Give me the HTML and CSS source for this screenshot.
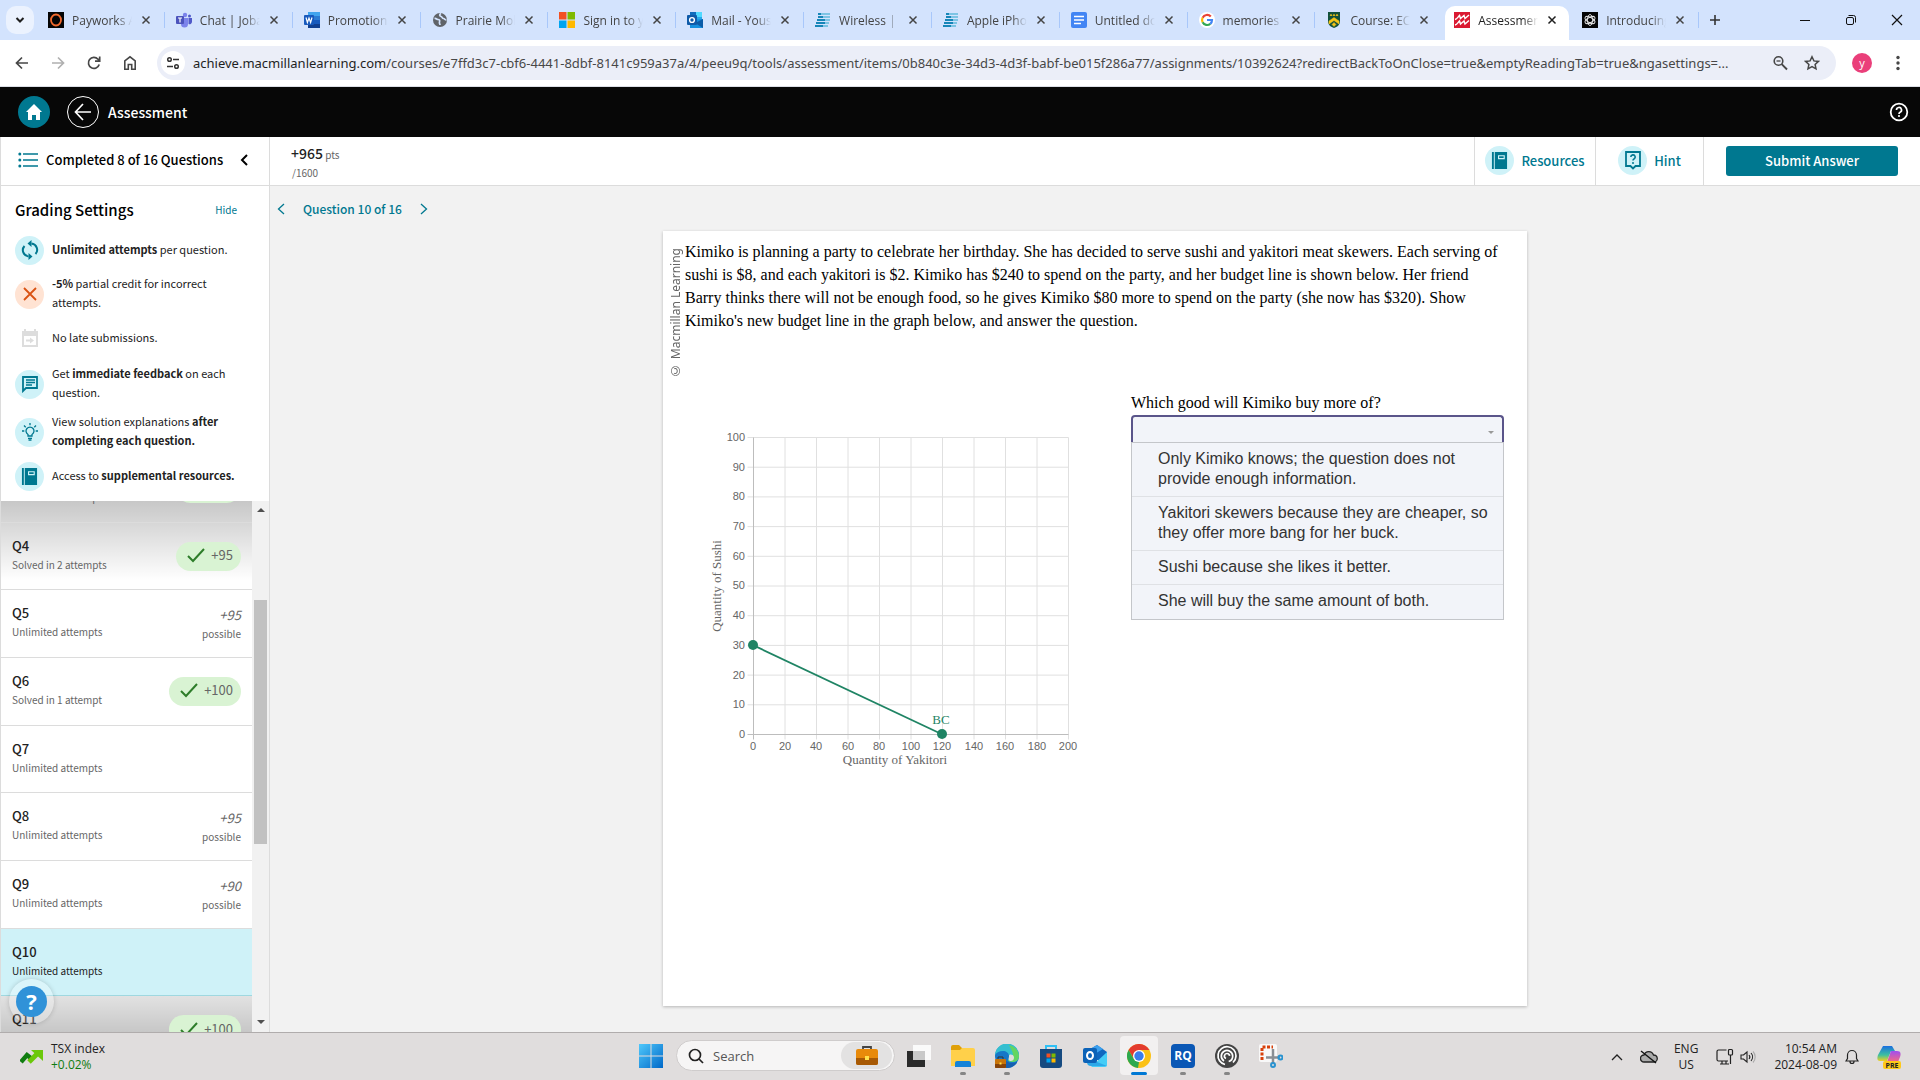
FILE: index.html
```html
<!DOCTYPE html>
<html lang="en">
<head>
<meta charset="utf-8">
<title>Assessment</title>
<link rel="stylesheet" href="styles.css">
</head>
<body>
<svg class="sprite" aria-hidden="true">
  <symbol id="x" viewBox="0 0 16 16"><path d="M4 4l8 8M12 4l-8 8" stroke="currentColor" stroke-width="1.7" fill="none"/></symbol>
  <symbol id="check" viewBox="0 0 20 16"><path d="M2 9l5 5L18 2" stroke="#2e7d2a" stroke-width="2" fill="none"/></symbol>
  <symbol id="book" viewBox="0 0 18 20"><path d="M1 1h2v18H1zM4 1h13v18H4z" fill="#007890"/><path d="M8 5h6v3H8z" fill="none" stroke="#cff2f8" stroke-width="1.2"/></symbol>
  <symbol id="stripes" viewBox="0 0 16 16"><path d="M3 1h12v2H3zM3 4h12v2H3zM2 7h13v2H2zM1 10h13v2H1zM0 13h13v2H0z" fill="#7cc4e4"/><path d="M3 1h3v2H3zM3 4h5v2H3zM2 7h8v2H2zM1 10h9v2H1zM0 13h8v2H0z" fill="#1786b8"/></symbol>
</svg>

<header class="tabstrip">
  <button class="tab-search" aria-label="Search tabs"><svg width="12" height="12" viewBox="0 0 12 12"><path d="M2.500 4l3.500 3.500L9.500 4" stroke="#1f1f1f" stroke-width="2" fill="none"/></svg></button>
  <nav class="tabs">
    <div class="tab"><svg class="fav" viewBox="0 0 16 16"><path d="M0 0h16v16H0z" fill="#050505"/><ellipse cx="8" cy="8" rx="5" ry="5.500" fill="none" stroke="#f26a2e" stroke-width="1.800"/></svg><span class="tab-title">Payworks Ap</span><button class="tab-x" aria-label="Close"><svg viewBox="0 0 16 16"><use href="#x"/></svg></button></div>
    <div class="tab"><svg class="fav" viewBox="0 0 16 16"><circle cx="9" cy="3" r="2.200" fill="#7b83eb"/><circle cx="13.500" cy="4" r="1.500" fill="#5059c9"/><path d="M5 6h7v6a3.500 3.500 0 0 1-7 0z" fill="#7b83eb"/><path d="M12.500 6H16v4a2.500 2.500 0 0 1-3.500 2z" fill="#5059c9"/><rect y="4" width="8" height="8" rx="1" fill="#4b53bc"/><path d="M2 6h4M4 6v4.500" stroke="#fff" stroke-width="1.200"/></svg><span class="tab-title">Chat | Joban</span><button class="tab-x" aria-label="Close"><svg viewBox="0 0 16 16"><use href="#x"/></svg></button></div>
    <div class="tab"><svg class="fav" viewBox="0 0 16 16"><path d="M4 0h12v4H4z" fill="#41a5ee"/><path d="M4 4h12v4H4z" fill="#2b7cd3"/><path d="M4 8h12v4H4z" fill="#185abd"/><path d="M4 12h12v4H4z" fill="#103f91"/><rect y="3" width="10" height="10" rx="1" fill="#185abd"/><path d="M2 5.500l1.400 5L5 6l1.600 4.500L8 5.500" fill="none" stroke="#fff" stroke-width="1.200"/></svg><span class="tab-title">Promotional</span><button class="tab-x" aria-label="Close"><svg viewBox="0 0 16 16"><use href="#x"/></svg></button></div>
    <div class="tab"><svg class="fav" viewBox="0 0 16 16"><circle cx="8" cy="8" r="7" fill="#5f6368"/><path d="M2.500 6.500c2-.5 2 1 3.500 1s2 1 1.500 2.500.5 1.500.5 3M9 1.500c-2 1-1.500 2.500 0 3s1 2 2.500 2 1 1.500 3 1.500" fill="none" stroke="#d3e3fd" stroke-width="1.700"/></svg><span class="tab-title">Prairie Mobil</span><button class="tab-x" aria-label="Close"><svg viewBox="0 0 16 16"><use href="#x"/></svg></button></div>
    <div class="tab"><svg class="fav" viewBox="0 0 16 16"><path d="M0 0h7.500v7.500H0z" fill="#f25022"/><path d="M8.500 0H16v7.500H8.500z" fill="#7fba00"/><path d="M0 8.500h7.500V16H0z" fill="#00a4ef"/><path d="M8.500 8.500H16V16H8.500z" fill="#ffb900"/></svg><span class="tab-title">Sign in to yo</span><button class="tab-x" aria-label="Close"><svg viewBox="0 0 16 16"><use href="#x"/></svg></button></div>
    <div class="tab"><svg class="fav" viewBox="0 0 16 16"><path d="M3 0h12v9H3z" fill="#28a8ea"/><path d="M9 0h6v5H9z" fill="#50d9ff"/><path d="M3 0h6v5H3z" fill="#0f6cbd"/><path d="M3 8l13-1v9H3z" fill="#1490df"/><path d="M16 7v9L8 11z" fill="#0a5ca8"/><rect y="3" width="10" height="10" rx="1" fill="#0f5ba8"/><circle cx="5" cy="8" r="2.400" fill="none" stroke="#fff" stroke-width="1.400"/></svg><span class="tab-title">Mail - Yousuf</span><button class="tab-x" aria-label="Close"><svg viewBox="0 0 16 16"><use href="#x"/></svg></button></div>
    <div class="tab"><svg class="fav"><use href="#stripes"/></svg><span class="tab-title">Wireless | Pr</span><button class="tab-x" aria-label="Close"><svg viewBox="0 0 16 16"><use href="#x"/></svg></button></div>
    <div class="tab"><svg class="fav"><use href="#stripes"/></svg><span class="tab-title">Apple iPhon</span><button class="tab-x" aria-label="Close"><svg viewBox="0 0 16 16"><use href="#x"/></svg></button></div>
    <div class="tab"><svg class="fav" viewBox="0 0 16 16"><rect width="16" height="16" rx="2" fill="#4285f4"/><path d="M3 4.500h10M3 8h10M3 11.500h7" stroke="#fff" stroke-width="1.600"/></svg><span class="tab-title">Untitled doc</span><button class="tab-x" aria-label="Close"><svg viewBox="0 0 16 16"><use href="#x"/></svg></button></div>
    <div class="tab"><svg class="fav" viewBox="0 0 16 16"><circle cx="8" cy="8" r="8" fill="#fff"/><g fill="none" stroke-width="2.200"><path d="M11.800 4.600A5 5 0 0 0 3.600 5.700" stroke="#ea4335"/><path d="M3.600 5.700a5 5 0 0 0 0 4.600" stroke="#fbbc05"/><path d="M3.600 10.300a5 5 0 0 0 7.700 1.500" stroke="#34a853"/><path d="M11.300 11.800A5 5 0 0 0 13 8H8" stroke="#4285f4"/></g></svg><span class="tab-title">memories qu</span><button class="tab-x" aria-label="Close"><svg viewBox="0 0 16 16"><use href="#x"/></svg></button></div>
    <div class="tab before-active"><svg class="fav" viewBox="0 0 16 16"><path d="M2 0h12v9c0 4-3 6-6 7-3-1-6-3-6-7z" fill="#12513b"/><path d="M4 4l1-2 1 2M7 4l1-2 1 2M10 4l1-2 1 2M3 9l5-3.500L13 9v3L8 8.500 3 12zM8 10.500l2 2-2 2-2-2z" fill="#f5c518" stroke="#f5c518" stroke-width=".5"/></svg><span class="tab-title">Course: ECO</span><button class="tab-x" aria-label="Close"><svg viewBox="0 0 16 16"><use href="#x"/></svg></button></div>
    <div class="tab active"><svg class="fav" viewBox="0 0 16 16"><path d="M0 0h16v16H0z" fill="#da1a32"/><path d="M1 7.500C3 7 4 5 5.500 3.500l1 3L10 3.500l1 3 4-3.500M1 13c2-.5 3-2.500 4.500-4l1 3L10 9l1 3 4-3.500" fill="none" stroke="#fff" stroke-width="1.500"/></svg><span class="tab-title">Assessment</span><button class="tab-x" aria-label="Close"><svg viewBox="0 0 16 16"><use href="#x"/></svg></button></div>
    <div class="tab"><svg class="fav" viewBox="0 0 16 16"><path d="M0 0h16v16H0z" fill="#050505"/><g fill="none" stroke="#e8e8e8" stroke-width=".9"><ellipse cx="8" cy="8" rx="2.600" ry="5.500"/><ellipse cx="8" cy="8" rx="2.600" ry="5.500" transform="rotate(60 8 8)"/><ellipse cx="8" cy="8" rx="2.600" ry="5.500" transform="rotate(120 8 8)"/></g></svg><span class="tab-title">Introducing</span><button class="tab-x" aria-label="Close"><svg viewBox="0 0 16 16"><use href="#x"/></svg></button></div>
  </nav>
  <button class="new-tab" aria-label="New tab"><svg width="14" height="14" viewBox="0 0 14 14"><path d="M7 2v10M2 7h10" stroke="#333" stroke-width="1.600"/></svg></button>
  <div class="win">
    <button aria-label="Minimize"><svg width="12" height="12" viewBox="0 0 12 12"><path d="M1 6.500h10" stroke="#111"/></svg></button>
    <button aria-label="Restore"><svg width="12" height="12" viewBox="0 0 12 12" fill="none" stroke="#111"><rect x="1.500" y="3.500" width="7" height="7" rx="1.500"/><path d="M3.500 1.500h5a2 2 0 0 1 2 2v5"/></svg></button>
    <button aria-label="Close window"><svg width="12" height="12" viewBox="0 0 12 12"><path d="M1 1l10 10M11 1L1 11" stroke="#111" stroke-width="1.200"/></svg></button>
  </div>
</header>

<div class="toolbar">
  <div class="nav-buttons">
    <button aria-label="Back"><svg width="16" height="16" viewBox="0 0 16 16"><path d="M14 8H3M8 2.500L2.500 8 8 13.500" stroke="#474747" stroke-width="1.700" fill="none"/></svg></button>
    <button aria-label="Forward"><svg width="16" height="16" viewBox="0 0 16 16"><path d="M2 8h11M8 2.500L13.500 8 8 13.500" stroke="#b0b0b0" stroke-width="1.700" fill="none"/></svg></button>
    <button aria-label="Reload"><svg width="16" height="16" viewBox="0 0 16 16"><path d="M13.200 9.500A5.500 5.500 0 1 1 12 4.200L13.500 5.700M13.700 1.500v4.700H9" stroke="#474747" stroke-width="1.700" fill="none"/></svg></button>
    <button aria-label="Home"><svg width="16" height="16" viewBox="0 0 16 16"><path d="M2.800 14.200V6L8 1.800 13.200 6v8.200H9.700V9.500H6.300v4.700z" stroke="#474747" stroke-width="1.600" fill="none"/></svg></button>
  </div>
  <div class="omnibox">
    <button class="site-info" aria-label="Site information"><svg width="14" height="14" viewBox="0 0 14 14" fill="none" stroke="#333" stroke-width="1.500"><circle cx="3.500" cy="3.500" r="1.800"/><path d="M7 3.500h6M1 10.500h6"/><circle cx="10.500" cy="10.500" r="1.800"/></svg></button>
    <span class="url"><b>achieve.macmillanlearning.com</b>/courses/e7ffd3c7-cbf6-4441-8dbf-8141c959a37a/4/peeu9q/tools/assessment/items/0b840c3e-34d3-4d3f-babf-be015f286a77/assignments/10392624?redirectBackToOnClose=true&amp;emptyReadingTab=true&amp;ngasettings=...</span>
    <button aria-label="Zoom"><svg width="16" height="16" viewBox="0 0 16 16" fill="none" stroke="#474747"><circle cx="6.500" cy="6" r="4.300" stroke-width="1.600"/><path d="M9.700 9.200L15 14.500" stroke-width="1.900"/><path d="M4.500 6h4" stroke-width="1.300"/></svg></button>
    <button aria-label="Bookmark"><svg width="16" height="16" viewBox="0 0 16 16"><path d="M8 1.800l1.900 4.100 4.500.5-3.300 3 .9 4.400L8 11.600l-4 2.200.9-4.400-3.300-3 4.500-.5z" stroke="#474747" stroke-width="1.500" fill="none"/></svg></button>
  </div>
  <button class="avatar">y</button>
  <button class="menu" aria-label="Menu"><svg width="4" height="16" viewBox="0 0 4 16" fill="#474747"><circle cx="2" cy="2.500" r="1.700"/><circle cx="2" cy="8" r="1.700"/><circle cx="2" cy="13.500" r="1.700"/></svg></button>
</div>

<div class="appbar">
  <a class="home" href="#" aria-label="Home"><svg width="18" height="18" viewBox="0 0 18 18"><path d="M9 1l8 8h-2v8h-4v-5H7v5H3V9H1z" fill="#fff"/></svg></a>
  <a class="back" href="#" aria-label="Back"><svg width="20" height="20" viewBox="0 0 20 20"><path d="M18 10H3M10 2L2.500 10l7.500 8" stroke="#fff" stroke-width="1.700" fill="none"/></svg></a>
  <h1>Assessment</h1>
  <button class="help" aria-label="Help"><svg width="20" height="20" viewBox="0 0 20 20"><circle cx="10" cy="10" r="8.300" stroke="#fff" stroke-width="1.800" fill="none"/><path d="M7.500 8a2.500 2.500 0 1 1 3.600 2.200c-.8.400-1.100.8-1.100 1.700" stroke="#fff" stroke-width="1.700" fill="none"/><circle cx="10" cy="14" r="1.100" fill="#fff"/></svg></button>
</div>

<div class="app">
  <aside class="side">
    <div class="side-head">
      <svg width="20" height="16" viewBox="0 0 20 16"><path d="M5 2h15M5 8h15M5 14h15" stroke="#007890" stroke-width="1.600"/><g fill="#007890"><circle cx="1.800" cy="2" r="1.500"/><circle cx="1.800" cy="8" r="1.500"/><circle cx="1.800" cy="14" r="1.500"/></g></svg>
      <span>Completed 8 of 16 Questions</span>
      <button aria-label="Collapse"><svg width="8" height="12" viewBox="0 0 8 12"><path d="M7 1L2 6l5 5" stroke="#000" stroke-width="2" fill="none"/></svg></button>
    </div>
    <section class="grading">
      <div class="grading-head"><h2>Grading Settings</h2><a href="#">Hide</a></div>
      <ul>
        <li><i class="dot"><svg width="18" height="20" viewBox="0 0 18 20" fill="none" stroke="#007890" stroke-width="2"><path d="M10.500 3.500a6.300 6.300 0 0 1 4 10.500M7.500 16.500a6.300 6.300 0 0 1-4-10.500"/><path d="M6.500 3.500L10.500 0v7zM11.500 16.500l-4 3.500v-7z" fill="#007890" stroke="none"/></svg></i><p><b>Unlimited attempts</b> per question.</p></li>
        <li><i class="dot warn"><svg width="14" height="14" viewBox="0 0 14 14"><path d="M1 1l12 12M13 1L1 13" stroke="#d95213" stroke-width="1.800"/></svg></i><p><b>-5%</b> partial credit for incorrect attempts.</p></li>
        <li><i class="dot none"><svg width="18" height="18" viewBox="0 0 18 18" fill="#ddd"><path d="M1 2h2V0h2v2h8V0h2v2h2v16H1zm2 5v9h12V7z" fill-rule="evenodd"/><path d="M5 10.500h4V8.500l4 3-4 3v-2H5z"/></svg></i><p>No late submissions.</p></li>
        <li class="tall"><i class="dot"><svg width="18" height="18" viewBox="0 0 18 18" fill="none" stroke="#007890"><path d="M2 16V2h14v11H5z" stroke-width="1.800"/><path d="M5 5h9M5 7.500h9M5 10h6" stroke-width="1.300"/></svg></i><p>Get <b>immediate feedback</b> on each question.</p></li>
        <li class="tall"><i class="dot"><svg width="18" height="18" viewBox="0 0 18 18" fill="none" stroke="#007890" stroke-width="1.300"><path d="M7 13v-1.500a4 4 0 1 1 4 0V13zM7 15.300h4M7.500 17h3M9 0v2.300M1 8h2.300M14.700 8H17M3 2.500l1.700 1.700M15 2.500l-1.700 1.700"/></svg></i><p>View solution explanations <b>after completing each question.</b></p></li>
        <li class="short"><i class="dot"><svg width="17" height="19"><use href="#book"/></svg></i><p>Access to <b>supplemental resources.</b></p></li>
      </ul>
    </section>
    <div class="list-area">
      <div class="list-clip">
        <ul class="list">
          <li><div><h3>Q3</h3><p>Solved in 2 attempts</p></div><span class="pill low"><svg width="20" height="16"><use href="#check"/></svg>+95</span></li>
          <li><div><h3>Q4</h3><p>Solved in 2 attempts</p></div><span class="pill"><svg width="20" height="16"><use href="#check"/></svg>+95</span></li>
          <li><div><h3>Q5</h3><p>Unlimited attempts</p></div><div class="pos"><em>+95</em><small>possible</small></div></li>
          <li><div><h3>Q6</h3><p>Solved in 1 attempt</p></div><span class="pill"><svg width="20" height="16"><use href="#check"/></svg>+100</span></li>
          <li><div><h3>Q7</h3><p>Unlimited attempts</p></div></li>
          <li><div><h3>Q8</h3><p>Unlimited attempts</p></div><div class="pos"><em>+95</em><small>possible</small></div></li>
          <li><div><h3>Q9</h3><p>Unlimited attempts</p></div><div class="pos"><em>+90</em><small>possible</small></div></li>
          <li class="current"><div><h3>Q10</h3><p>Unlimited attempts</p></div></li>
          <li><div><h3>Q11</h3></div><span class="pill"><svg width="20" height="16"><use href="#check"/></svg>+100</span></li>
        </ul>
      </div>
      <div class="scroll"><svg width="8" height="5" viewBox="0 0 8 5"><path d="M0 5l4-4 4 4z" fill="#505050"/></svg><div class="track"><div class="thumb"></div></div><svg width="8" height="5" viewBox="0 0 8 5"><path d="M0 0l4 4 4-4z" fill="#505050"/></svg></div>
      <button class="chat" aria-label="Help"><span>?</span></button>
    </div>
  </aside>

  <main>
    <div class="topline">
      <div class="score"><p><strong>+965</strong> pts</p><p class="total">/1600</p></div>
      <button class="tool res"><i class="dot"><svg width="17" height="19"><use href="#book"/></svg></i>Resources</button>
      <button class="tool hint"><i class="dot"><svg width="18" height="20" viewBox="0 0 18 20" fill="none" stroke="#007890" stroke-width="1.800"><path d="M2 2h14v14h-4.500L9 18.500 6.500 16H2z"/><path d="M6.800 7a2.200 2.200 0 1 1 3.200 2c-.8.400-1 .8-1 1.600" stroke-width="1.600"/><circle cx="9" cy="13" r="1" fill="#007890" stroke="none"/></svg></i>Hint</button>
      <div class="submit-wrap"><button class="submit">Submit Answer</button></div>
    </div>
    <nav class="qnav">
      <button aria-label="Previous"><svg width="8" height="12" viewBox="0 0 8 12"><path d="M7 1L1.500 6 7 11" stroke="#007890" stroke-width="1.300" fill="none"/></svg></button>
      <span>Question 10 of 16</span>
      <button aria-label="Next"><svg width="8" height="12" viewBox="0 0 8 12"><path d="M1 1l5.500 5L1 11" stroke="#007890" stroke-width="1.300" fill="none"/></svg></button>
    </nav>
    <article class="card">
      <div class="copy">© Macmillan Learning</div>
      <p class="passage">Kimiko is planning a party to celebrate her birthday. She has decided to serve sushi and yakitori meat skewers. Each serving of sushi is $8, and each yakitori is $2. Kimiko has $240 to spend on the party, and her budget line is shown below. Her friend Barry thinks there will not be enough food, so he gives Kimiko $80 more to spend on the party (she now has $320). Show Kimiko's new budget line in the graph below, and answer the question.</p>
      <div class="work">
        <svg class="chart" width="400" height="350" viewBox="0 0 400 350">
          <path d="M80 12.500v302M111.500 12.500v302M143 12.500v302M174.500 12.500v302M206 12.500v302M237.500 12.500v302M269 12.500v302M300.500 12.500v302M332 12.500v302M363.500 12.500v302M42.500 12.500h321M42.500 42.200h321M42.500 71.900h321M42.500 101.600h321M42.500 131.300h321M42.500 161h321M42.500 190.700h321M42.500 220.400h321M42.500 250.100h321M42.500 279.800h321" stroke="#e0e0e0"/>
          <path d="M48.500 12.500v302M42.500 309.500h321" stroke="#bdbdbd"/>
          <g class="yt"><text x="40" y="16">100</text><text x="40" y="46">90</text><text x="40" y="75">80</text><text x="40" y="105">70</text><text x="40" y="135">60</text><text x="40" y="164">50</text><text x="40" y="194">40</text><text x="40" y="224">30</text><text x="40" y="254">20</text><text x="40" y="283">10</text><text x="40" y="313">0</text></g>
          <g class="xt"><text x="48" y="325">0</text><text x="80" y="325">20</text><text x="111" y="325">40</text><text x="143" y="325">60</text><text x="174" y="325">80</text><text x="206" y="325">100</text><text x="237" y="325">120</text><text x="269" y="325">140</text><text x="300" y="325">160</text><text x="332" y="325">180</text><text x="363" y="325">200</text></g>
          <text class="at" x="190" y="339">Quantity of Yakitori</text>
          <text class="at" transform="translate(16 161) rotate(-90)">Quantity of Sushi</text>
          <path d="M48.500 220.400L237.500 309.500" stroke="#1f8464" stroke-width="1.800"/>
          <circle cx="48" cy="220" r="5" fill="#1f8464"/><circle cx="237" cy="309" r="5" fill="#1f8464"/>
          <text class="bc" x="236" y="299">BC</text>
        </svg>
        <div class="answer">
          <label for="good">Which good will Kimiko buy more of?</label>
          <div class="select"><select id="good"><option></option></select><svg width="6" height="4" viewBox="0 0 6 4"><path d="M0 0h6L3 3z" fill="#999"/></svg></div>
          <ul class="options" role="listbox">
            <li role="option">Only Kimiko knows; the question does not provide enough information.</li>
            <li role="option">Yakitori skewers because they are cheaper, so they offer more bang for her buck.</li>
            <li role="option">Sushi because she likes it better.</li>
            <li role="option">She will buy the same amount of both.</li>
          </ul>
        </div>
      </div>
    </article>
  </main>
</div>

<footer class="taskbar">
  <div class="widget">
    <svg width="24" height="16" viewBox="0 0 24 16"><path d="M1 13l6-7 5 4" fill="none" stroke="#107c10" stroke-width="4.500"/><path d="M9 13L18 4" fill="none" stroke="#6bc80a" stroke-width="5"/><path d="M11 1h12v11z" fill="#6bc80a"/></svg>
    <p>TSX index<br><span class="up">+0.02%</span></p>
  </div>
  <div class="dock">
    <button aria-label="Start"><svg width="24" height="24" viewBox="0 0 24 24"><defs><linearGradient id="w" x2="1" y2="1"><stop stop-color="#4fc8fb"/><stop offset="1" stop-color="#0068c8"/></linearGradient></defs><path d="M0 0h11.500v11.500H0zM12.500 0H24v11.500H12.500zM0 12.500h11.500V24H0zM12.500 12.500H24V24H12.500z" fill="url(#w)"/></svg></button>
    <div class="search"><svg width="16" height="16" viewBox="0 0 16 16" fill="none" stroke="#222" stroke-width="1.700"><circle cx="7" cy="7" r="5.500"/><path d="M11 11l4 4"/></svg><input type="text" placeholder="Search" aria-label="Search"><i><svg width="24" height="20" viewBox="0 0 24 20"><path d="M8 4V1h8v3" fill="none" stroke="#444" stroke-width="1.800"/><rect x="1" y="3" width="22" height="16" rx="2" fill="#e88a0a"/><path d="M1 12h22v5a2 2 0 0 1-2 2H3a2 2 0 0 1-2-2z" fill="#a85a05"/><rect x="10" y="10" width="4" height="4" fill="#ffe14a"/></svg></i></div>
    <button aria-label="Task view"><svg width="24" height="24" viewBox="0 0 24 24"><path d="M0 7h18v16H0z" fill="#2a2a2a"/><path d="M6 1h18v15H6z" fill="#fafafa"/><path d="M6 7h12v9H6z" fill="#c9c9c9"/></svg></button>
    <button class="run" aria-label="File Explorer"><svg width="24" height="24" viewBox="0 0 24 24"><path d="M0 3a2 2 0 0 1 2-2h6l3 3h11v6H0z" fill="#e0a008"/><path d="M0 6h9l2-2h11a2 2 0 0 1 2 2v16H0z" fill="#ffd04a"/><path d="M4 23v-4a2 2 0 0 1 2-2h12a2 2 0 0 1 2 2v4z" fill="#1583d8"/></svg></button>
    <button class="run" aria-label="Edge"><svg width="24" height="24" viewBox="0 0 24 24"><circle cx="12" cy="12" r="12" fill="#1677c8"/><path d="M0 11A12 12 0 0 1 24 12c0 4-3 6-6 6-3 0-5-1-5-2 0-1 1-1 1-4 0-3-3-5-6-5-4 0-7 2-8 4z" fill="#35bfd0"/><path d="M14 1a12 12 0 0 1 10 11c0 4-3 6-6 6-3 0-5-1-5-2 5 0 6-5 4-9z" fill="#63d561"/><path d="M10 12c-1 5 3 7 7 7 2 0 4-.5 5-1-2 4-6 6-11 6z" fill="#1560b0"/><path d="M14 12c0-2 4-2 5 1 0 3-1 4-4 4-2-1-1-3-1-5z" fill="#e0dddd"/><rect y="15" width="11" height="9" rx="1" fill="#c87409"/><path d="M0 20h11v3a1 1 0 0 1-1 1H1a1 1 0 0 1-1-1z" fill="#86430a"/><path d="M3 15v-2h5v2" stroke="#333" fill="none"/><path d="M4.500 18.500h2v2h-2z" fill="#ffe14a"/></svg></button>
    <button aria-label="Store"><svg width="24" height="24" viewBox="0 0 24 24"><path d="M7 6V2h10v4" fill="none" stroke="#30c0f5" stroke-width="2"/><path d="M1 5h22v16a3 3 0 0 1-3 3H4a3 3 0 0 1-3-3z" fill="#164a80"/><path d="M7.500 9.500h4v4h-4z" fill="#f25022"/><path d="M12.500 9.500h4v4h-4z" fill="#7fba00"/><path d="M7.500 14.500h4v4h-4z" fill="#00a4ef"/><path d="M12.500 14.500h4v4h-4z" fill="#ffb900"/></svg></button>
    <button aria-label="Outlook"><svg width="24" height="24" viewBox="0 0 24 24"><path d="M4 7l10-6 10 7v8H4z" fill="#1068c0"/><path d="M7 5l7-4 6 4-10 6z" fill="#3ba0ee"/><path d="M24 8v13a2 2 0 0 1-2 2H8z" fill="#45cdf7"/><path d="M4 14l20 8H8a4 4 0 0 1-4-4z" fill="#2ca8e8"/><rect y="4" width="14" height="15" rx="2" fill="#0c63b8"/><ellipse cx="7" cy="11.500" rx="3" ry="3.500" fill="none" stroke="#fff" stroke-width="2"/></svg></button>
    <button class="run front" aria-label="Chrome"><svg width="24" height="24" viewBox="0 0 24 24"><circle cx="12" cy="12" r="12" fill="#fbc116"/><path d="M1.600 6A12 12 0 0 1 22.400 6H12L7 15z" fill="#e33b2e"/><path d="M1.600 6l5.200 9L12 18l-1 6A12 12 0 0 1 1.600 6z" fill="#2da94f"/><circle cx="12" cy="12" r="6" fill="#fff"/><circle cx="12" cy="12" r="4.700" fill="#3b7ded"/></svg></button>
    <button class="run" aria-label="RQ"><span class="rq">RQ</span></button>
    <button class="run" aria-label="Workspace"><svg width="24" height="24" viewBox="0 0 24 24" fill="none" stroke="#fff" stroke-width="1.700"><circle cx="12" cy="12" r="12" fill="#444" stroke="none"/><path d="M10 20.500A9 9 0 1 1 21 12c0 3-1.500 5-3 6.500"/><path d="M9 17a5.700 5.700 0 1 1 8.700-5c0 3-2 5-4 5.500"/><path d="M11 14.500a2.600 2.600 0 1 1 3.600-2.600"/></svg></button>
    <button aria-label="Snipping Tool"><svg width="24" height="24" viewBox="0 0 24 24"><rect width="18" height="18" rx="2" fill="#f8f8f8"/><path d="M3 16V3h11" fill="none" stroke="#d8400b" stroke-width="3" stroke-dasharray="3 1.500"/><path d="M14 5v14M7 13.500h14" stroke="#8a8f94" stroke-width="2.500"/><g fill="none" stroke="#2a93d0" stroke-width="2"><circle cx="14" cy="21" r="2"/><circle cx="21.500" cy="13.500" r="2"/></g></svg></button>
  </div>
  <div class="tray">
    <svg width="12" height="8" viewBox="0 0 12 8"><path d="M1 7l5-5 5 5" stroke="#222" stroke-width="1.300" fill="none"/></svg>
    <svg class="cloud" width="18" height="14" viewBox="0 0 18 14"><path d="M4 12a3.500 3.500 0 0 1 0-7 5 5 0 0 1 9.500 0A3.500 3.500 0 0 1 14 12z" fill="#aaa" stroke="#222" stroke-width="1.300"/><path d="M1 1l15 12" stroke="#111" stroke-width="1.400"/></svg>
    <p class="lang">ENG<br>US</p>
    <svg width="18" height="18" viewBox="0 0 18 18" fill="none" stroke="#222" stroke-width="1.200"><path d="M10.500 2H2.500A1.500 1.500 0 0 0 1 3.500v8A1.500 1.500 0 0 0 2.500 13h9.500M4 16h9M6 13v3M10 13v3M14.500 7v9"/><rect x="12.500" y="1.500" width="4" height="5.500" rx="1"/></svg>
    <svg width="16" height="14" viewBox="0 0 16 14" fill="none" stroke="#222" stroke-width="1.100"><path d="M1 5v4h2.500L7 12V2L3.500 5zM9 5a3 3 0 0 1 0 4M11 3a6 6 0 0 1 0 8"/><path d="M13 1.500a8 8 0 0 1 0 11" stroke="#aaa"/></svg>
    <p class="clock">10:54 AM<br>2024-08-09</p>
    <svg width="14" height="16" viewBox="0 0 14 16" fill="none" stroke="#222" stroke-width="1.200"><path d="M1 12l1.500-2.500V6a4.500 4.500 0 0 1 9 0v3.500L13 12zM5 12.500a2 2 0 0 0 4 0"/></svg>
    <svg class="copilot" width="24" height="24" viewBox="0 0 24 24"><defs><linearGradient id="c1" x2="0" y2="1"><stop stop-color="#1b6fe0"/><stop offset=".6" stop-color="#3cc0a0"/><stop offset="1" stop-color="#f0d020"/></linearGradient><linearGradient id="c2" x2="0" y2="1"><stop stop-color="#a04ff0"/><stop offset="1" stop-color="#f56a80"/></linearGradient></defs><path d="M6 1h9l3 5h-4l-4 10H3c-3 0-3-3-2-6z" fill="url(#c1)"/><path d="M14 6h6c4 0 4 3 3 6l-2 5H10z" fill="url(#c2)"/><rect x="6" y="16" width="18" height="8" rx="2" fill="#ffc91a"/><text x="15" y="23" class="pre">PRE</text></svg>
  </div>
</footer>
</body>
</html>
```
FILE: styles.css
```css
* { box-sizing: border-box; margin: 0; padding: 0; }
ul { list-style: none; }
button { border: 0; background: none; font: inherit; color: inherit; display: flex; align-items: center; justify-content: center; }
a { color: inherit; text-decoration: none; }
svg { display: block; flex: none; }
.sprite { position: absolute; width: 0; height: 0; }
body { display: flex; flex-direction: column; height: 100vh; overflow: hidden; font-family: "Noto Sans CJK SC", "Noto Sans", sans-serif; font-size: 12px; color: #222; }

/* browser chrome */
.tabstrip { flex: none; display: flex; align-items: flex-end; height: 40px; padding-left: 6px; background: #d3e3fd; font-family: "Open Sans", sans-serif; }
.tab-search { width: 28px; height: 28px; margin: 0 3px 6px 0; border-radius: 10px; background: #ebf2fe; }
.tabs { flex: 0 1 1662px; display: flex; min-width: 0; }
.tab { flex: 1; min-width: 0; height: 34px; display: flex; align-items: center; padding: 0 11px 6px; position: relative; color: #444; }
.tab::after { content: ""; position: absolute; right: 0; top: 6px; width: 1px; height: 16px; background: #a8c7fa; }
.tab.active { background: #fff; border-radius: 10px 10px 0 0; color: #1f1f1f; padding: 0 9px 6px; margin: 0 2px; }
.tab.active::after, .tab.before-active::after { display: none; }
.fav { width: 16px; height: 16px; margin-right: 8px; }
.tab-title { flex: 1; min-width: 0; overflow: hidden; white-space: nowrap; padding-top: 2px; line-height: 18px; -webkit-mask-image: linear-gradient(to right, #000 75%, transparent); mask-image: linear-gradient(to right, #000 75%, transparent); }
.tab-x { width: 16px; height: 16px; margin-left: 6px; }
.tab-x svg { width: 14px; height: 14px; }
.new-tab { width: 32px; height: 28px; margin-bottom: 6px; }
.win { display: flex; margin-left: auto; height: 40px; }
.win button { width: 46px; height: 40px; }
.toolbar { flex: none; display: flex; align-items: center; height: 47px; padding: 0 14px 0 4px; background: #fff; border-bottom: 1px solid #dcdfe6; font-family: "Open Sans", sans-serif; }
.nav-buttons { display: flex; }
.nav-buttons button { width: 36px; height: 34px; }
.omnibox { flex: 1; min-width: 0; display: flex; align-items: center; height: 34px; margin: 0 16px 0 9px; padding: 0 16px 0 4px; gap: 16px; border-radius: 17px; background: #ebeef8; }
.site-info { flex: none; width: 24px; height: 24px; border-radius: 12px; background: #fff; }
.url { flex: 1; min-width: 0; margin-left: -8px; overflow: hidden; white-space: nowrap; font: 13px/20px "Noto Sans", sans-serif; color: #474747; }
.url b { font-weight: 400; color: #1f1f1f; }
.avatar { width: 20px; height: 20px; border-radius: 10px; background: #ea3f7a; color: #fff; font-size: 11px; line-height: 16px; }
.menu { width: 16px; margin-left: 18px; }

/* app header */
.appbar { flex: none; display: flex; align-items: center; height: 50px; padding: 0 11px 0 18px; background: #070707; color: #fff; }
.home, .back { display: flex; align-items: center; justify-content: center; width: 32px; height: 32px; border-radius: 16px; }
.home { background: #007890; margin-right: 17px; }
.back { border: 1px solid #fff; margin-right: 9px; }
h1 { font-size: 14px; line-height: 20px; font-weight: 500; }
.help { margin-left: auto; }

.app { flex: 1; min-height: 0; display: flex; }
.side { flex: none; display: flex; flex-direction: column; width: 270px; border: 1px solid #dcdcdc; border-width: 0 1px; background: #fff; }
.side-head { flex: none; display: flex; align-items: center; height: 49px; padding: 0 21px 2px 17px; border-bottom: 1px solid #dcdcdc; font-size: 13px; font-weight: 500; color: #000; }
.side-head span { flex: 1; margin-left: 8px; line-height: 20px; white-space: nowrap; }
.grading { flex: none; height: 315px; padding: 14px 32px 0 14px; }
.grading-head { display: flex; align-items: center; justify-content: space-between; margin-bottom: 8px; color: #007890; font-size: 10px; line-height: 20px; }
h2 { font-size: 15px; line-height: 20px; font-weight: 500; color: #000; white-space: nowrap; }
.grading ul { margin-right: -14px; font-size: 11px; }
.grading li { display: flex; align-items: center; gap: 8px; height: 44px; line-height: 19px; }
.grading li.tall { height: 48px; }
.grading li.short { height: 40px; }
.grading p { padding-bottom: 2px; }
.grading b { font-weight: 700; }
.dot { flex: none; display: flex; align-items: center; justify-content: center; width: 29px; height: 29px; border-radius: 50%; background: #cff2f8; }
.dot.warn { background: #ffe3d3; }
.dot.none { background: none; }

.list-area { flex: 1; min-height: 0; display: flex; position: relative; }
.list-clip { flex: 1; overflow: hidden; background: linear-gradient(rgba(0,0,0,.22), transparent 80px), linear-gradient(to top, rgba(0,0,0,.22), transparent 76px), #fff; }
.list { display: grid; grid-auto-rows: 1fr; height: calc(100% + 78px); margin-top: -46px; }
.list li { display: flex; justify-content: space-between; min-height: 0; padding: 13px 11px 0; border-bottom: 1px solid #dcdcdc; color: #666; }
.list .current { background: #cff2f8; border-color: #9fd8e0; }
.list .current p { color: #222; }
h3 { font-size: 13px; line-height: 20px; font-weight: 500; color: #222; }
.list p { font-size: 10px; line-height: 18px; }
.pill { display: flex; align-items: center; gap: 5px; height: 29px; margin-top: 6px; padding: 0 8px 2px 10px; border-radius: 15px; background: #d9f3d3; font-size: 13px; line-height: 20px; }
.pos { text-align: right; padding-top: 2px; }
.pos em { display: block; font-size: 13px; line-height: 20px; }
.pos small { display: block; font-size: 10px; line-height: 18px; }
.scroll { flex: none; display: flex; flex-direction: column; align-items: center; width: 17px; padding: 6px 0 7px; background: #f1f1f1; }
.track { flex: 1; width: 13px; padding-top: 88px; }
.thumb { height: 58%; background: #c1c1c1; }
.chat { position: absolute; left: 8px; bottom: 8px; width: 45px; height: 45px; border-radius: 50%; background: rgba(255,255,255,.25); box-shadow: 0 0 5px rgba(0,0,0,.18); }
.chat span { width: 31px; height: 31px; border-radius: 50%; background: #3092d8; color: #fff; font: 700 22px/31px "Open Sans", sans-serif; text-align: center; }

main { flex: 1; min-width: 0; display: flex; flex-direction: column; background: #f2f2f2; }
.topline { flex: none; display: flex; height: 49px; background: #fff; border-bottom: 1px solid #dcdcdc; }
.score { flex: 1; padding: 7px 0 0 21px; font-size: 10px; color: #666; }
.score p { line-height: 18px; }
.score strong { font-size: 14px; font-weight: 500; color: #222; }
.score .total { padding-left: 1px; }
.tool { gap: 7px; padding-bottom: 2px; border-left: 1px solid #dcdcdc; color: #007890; font-size: 13px; font-weight: 500; }
.res { width: 121px; }
.hint { width: 108px; }
.submit-wrap { display: flex; align-items: center; padding: 0 22px; border-left: 1px solid #dcdcdc; }
.submit { width: 172px; height: 30px; border-radius: 3px; background: #007890; color: #fff; font-size: 13px; font-weight: 500; line-height: 20px; }
.qnav { flex: none; display: flex; align-items: center; gap: 18px; height: 45px; padding-left: 7px; color: #007890; font-size: 12px; font-weight: 500; line-height: 20px; }

.card { position: relative; width: 864px; max-width: 100%; min-height: 775px; margin: 0 auto; padding: 9px 22px 0; background: #fff; box-shadow: 0 1px 3px rgba(0,0,0,.25); font-family: "Liberation Serif", serif; font-size: 16px; color: #000; }
.copy { position: absolute; left: 4px; top: 17px; writing-mode: vertical-rl; transform: rotate(180deg); font: 12px/18px "Noto Sans", sans-serif; color: #666; white-space: nowrap; }
.passage { line-height: 23px; }
.work { display: flex; justify-content: space-between; align-items: flex-start; padding: 59px 1px 0 20px; }
.chart { margin-top: 34px; }
.chart text { fill: #666; }
.yt text { font: 11px "Liberation Sans", sans-serif; text-anchor: end; }
.xt text { font: 11px "Liberation Sans", sans-serif; text-anchor: middle; }
.chart .at { font: 13px "Liberation Serif", serif; text-anchor: middle; }
.chart .bc { font: 13px "Liberation Serif", serif; text-anchor: middle; fill: #1f8464; }
.answer { width: 373px; }
.answer label { display: block; line-height: 24px; }
.select { display: flex; position: relative; height: 27px; border: 2px solid #5a558a; border-bottom: 0; border-radius: 4px 4px 0 0; background: #f2f4f9; }
.select select { flex: 1; border: 0; background: none; appearance: none; outline: 0; }
.select svg { position: absolute; right: 8px; top: 14px; }
.options { border: 1px solid #c4c6ca; background: #f2f4f9; font: 16px/20px "Liberation Sans", sans-serif; color: #333; }
.options li { padding: 6px 8px 7px 26px; border-bottom: 1px solid #dfe1e5; }
.options li:last-child { border: 0; padding-bottom: 8px; }

/* desktop taskbar */
.taskbar { flex: none; display: grid; grid-template-columns: 1fr auto 1fr; align-items: center; height: 48px; border-top: 1px solid #b0acac; background: #e0dddd; font-family: "Open Sans", sans-serif; line-height: 16px; }
.widget { display: flex; align-items: center; gap: 7px; padding-left: 20px; }
.up { color: #107c10; }
.dock { display: flex; align-items: center; padding: 0 0 2px 2px; }
.dock button { position: relative; width: 44px; height: 45px; }
.run::after { content: ""; position: absolute; bottom: 3px; left: 19px; width: 6px; height: 3px; border-radius: 2px; background: #858585; }
.front::before { content: ""; position: absolute; inset: 3px; border-radius: 4px; background: #f2f0f0; }
.front svg { position: relative; }
.front::after { left: 14px; width: 16px; background: #0078d4; }
.rq { width: 24px; height: 24px; border-radius: 4px; background: #0a57b5; color: #fff; font: 700 12px/24px "Open Sans", sans-serif; }
.search { display: flex; align-items: center; width: 219px; height: 31px; margin: 0 2px 0 3px; padding: 0 2px 0 11px; gap: 9px; border: 1px solid #cfcccc; border-radius: 16px; background: #f6f5f5; }
.search input { flex: 1; min-width: 0; border: 0; background: none; outline: 0; font: 13px/18px "Open Sans", sans-serif; }
.search input::placeholder { color: #555; }
.search i { display: flex; align-items: center; justify-content: center; width: 51px; height: 27px; border-radius: 14px; background: #e3e2e2; }
.tray { display: flex; align-items: center; justify-content: flex-end; padding-right: 19px; }
.cloud { margin: 0 16px 0 17px; }
.lang { text-align: center; margin-right: 18px; }
.tray svg + svg:not(.cloud):not(.copilot) { margin-left: 6px; }
.clock { text-align: right; margin: 0 8px 0 18px; }
.copilot { margin-left: 18px; }
.pre { font: 700 7px "Open Sans", sans-serif; text-anchor: middle; fill: #222; }
```
